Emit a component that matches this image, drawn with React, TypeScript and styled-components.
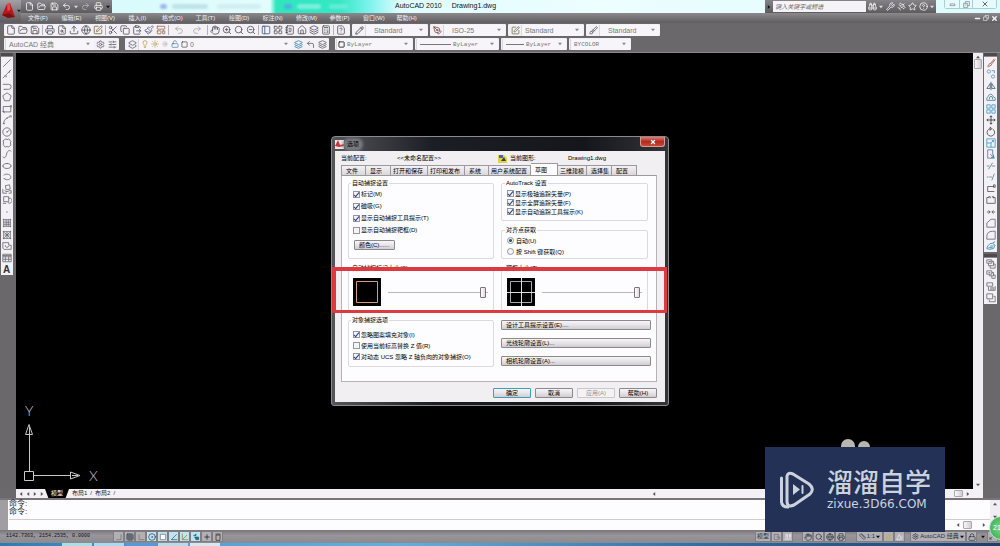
import React from "react";
import styled, { createGlobalStyle, css } from "styled-components";
import {
  File, FolderOpen, Save, Printer, FileSearch, Upload, Globe, SquarePen, Scissors, Copy, ClipboardPaste,
  Paintbrush, LayoutTemplate, Undo2, Redo2, Hand, ZoomIn, Search, ZoomOut, PanelLeft, LayoutGrid, NotebookText,
  House, Layers, Calculator, FileQuestion, Settings, SlidersHorizontal, Lightbulb, Sun, SunDim, LockOpen,
  Square, Layers2, Layers3, CornerUpLeft, Binoculars, Wrench, Satellite, Star, CircleHelp, Pencil,
  PenTool, Brush, Minus, X, Ruler, CircleDot, Printer as PlotIcon, Lock, Grid3x3, Maximize2,
} from "lucide-react";

const Global = createGlobalStyle`
  * { box-sizing: border-box; }
  body { margin: 0; background: #6b696b; font-family: "Liberation Sans", "Noto Sans CJK SC", sans-serif; }
  button, input, select, textarea { font: inherit; color: inherit; margin: 0; padding: 0; border: 0; }
  svg { display: block; flex: none; }
`;

const Page = styled.div`
  position: relative;
  display: flex;
  flex-direction: column;
  min-height: 100vh;
  overflow: hidden;
  font-size: 7px;
  line-height: 9px;
  color: #333;
`;

/* ---------- title bar ---------- */
const TitleBar = styled.header`
  position: relative;
  display: flex;
  height: 13px;
  background: linear-gradient(90deg, #d9fbfb 0 12%, #e2fdfc 27%, #2fe6bd 27.6%, #35e8c4 34%, #7ff3ee 37%, #dffcff 40%, #edfeff 60%, #ddfbfc 100%);
`;
const QuickBar = styled.div`
  display: flex;
  align-items: center;
  justify-content: space-between;
  width: 112px;
  padding: 0 2px 0 25px;
  color: #fff;
  background: linear-gradient(#858387, #5d5b5f);
`;
const Title = styled.h1`
  position: absolute;
  top: 1px;
  left: 395px;
  margin: 0;
  display: flex;
  gap: 10px;
  font-size: 7px;
  line-height: 10px;
  font-weight: 400;
  color: #111;
`;
const GlassBlur = styled.div`
  display: flex;
  align-items: center;
  gap: 5px;
  padding-left: 48px;
  filter: blur(1px);
`;
const Smudge = styled.i<{ $w: number; $c: string; $gap?: number }>`
  width: ${(p) => p.$w}px;
  height: 5px;
  border-radius: 3px;
  margin-left: ${(p) => p.$gap || 0}px;
  background: ${(p) => p.$c};
`;
const InfoCenter = styled.div`
  display: flex;
  align-items: center;
  justify-content: space-between;
  width: 171px;
  margin-left: auto;
  padding: 0 2px;
  color: #fff;
  background: linear-gradient(#858387, #5d5b5f);
`;
const SearchBox = styled.input`
  width: 93px;
  height: 11px;
  padding-left: 2px;
  background: #f5f3f7;
  font-size: 6px;
  font-style: italic;
  &::placeholder { color: #666; opacity: 1; }
`;
const WindowButtons = styled.div`
  display: flex;
  height: 9px;
  margin: 0 3px 0 8px;
  border: 1px solid #a9cdd4;
  border-top: 0;
  border-radius: 0 0 3px 3px;
`;
const WinButton = styled.button<{ $w: number }>`
  display: grid;
  place-items: center;
  width: ${(p) => p.$w}px;
  background: #e6fafb;
  color: #667;
  & + & { border-left: 1px solid #a9cdd4; }
`;
const LogoButton = styled.button`
  position: absolute;
  top: 0;
  left: 0;
  display: flex;
  align-items: center;
  width: 21px;
  height: 22px;
  background: linear-gradient(#a3a1a5, #5e5c60);
  color: #222;
`;
const Plain = styled.button`
  display: grid;
  place-items: center;
  background: none;
`;

/* ---------- menu bar ---------- */
const MenuBar = styled.nav`
  display: flex;
  align-items: center;
  justify-content: space-between;
  height: 10px;
  padding: 0 2px 0 28px;
  background: linear-gradient(#8b898c, #5f5d60);
  color: #f2f2f2;
`;
const Menus = styled.div`
  display: grid;
  grid-template-columns: repeat(12, 1fr);
  width: 402px;
`;
const MenuItem = styled.button`
  background: none;
  text-align: left;
  font-size: 6px;
  line-height: 9px;
  white-space: nowrap;
`;
const DocButtons = styled.div`
  display: flex;
  gap: 2px;
`;

/* ---------- toolbars ---------- */
const Toolbars = styled.div`
  display: flex;
  flex-direction: column;
  gap: 2px;
  padding: 1px 4px 2px;
  background: #6a686b;
  border-bottom: 1px solid #8a888b;
`;
const ToolRow = styled.div<{ $gap: number }>`
  display: flex;
  gap: ${(p) => p.$gap}px;
`;
const Strip = styled.div<{ $w?: number }>`
  display: flex;
  align-items: center;
  width: ${(p) => (p.$w ? p.$w + "px" : "auto")};
  height: 12px;
  padding: 0 1px;
  background: #f3f1f5;
  border-radius: 1px;
  color: #4a4a55;
`;
const Tool = styled.button<{ $c?: string; $w?: number }>`
  display: grid;
  place-items: center;
  width: ${(p) => p.$w || 12}px;
  height: 11px;
  background: none;
  color: ${(p) => p.$c || "#55555e"};
`;
const Sep = styled.i`
  width: 1px;
  height: 10px;
  margin: 0 1px;
  background: #b4b2b6;
`;
const Field = styled.label<{ $w: number; $pad: number }>`
  display: flex;
  align-items: center;
  gap: 2px;
  width: ${(p) => p.$w}px;
  height: 11px;
  padding: 0 4px 0 ${(p) => p.$pad}px;
  border-left: 1px solid #dad8dc;
  background: #f7f5f9;
`;
const Select = styled.select<{ $mono?: boolean }>`
  flex: 1;
  min-width: 0;
  appearance: none;
  background: none;
  color: #777;
  font-size: ${(p) => (p.$mono ? 6 : 7)}px;
  line-height: 9px;
  font-family: ${(p) => (p.$mono ? '"Liberation Mono"' : '"Liberation Sans"')}, "Noto Sans CJK SC", sans-serif;
`;

/* ---------- workspace ---------- */
const Workspace = styled.main`
  display: flex;
  flex: 1;
  min-height: 400px;
`;
const SidePalette = styled.aside<{ $w: number }>`
  display: flex;
  flex-direction: column;
  width: ${(p) => p.$w}px;
  padding: 0 3px 0 1px;
  background: #6a686b;
`;
const Grip = styled.i`
  height: 4px;
  background: #4c4a4d;
  border-bottom: 1px solid #8a888b;
`;
const ToolColumn = styled.div<{ $h: number }>`
  display: flex;
  flex-direction: column;
  justify-content: space-around;
  align-items: center;
  height: ${(p) => p.$h}px;
  margin-bottom: 2px;
  background: #f3f1f5;
`;
const Canvas = styled.section`
  display: flex;
  align-items: flex-end;
  flex: 1;
  background: #000;
`;
const VScroll = styled.div`
  display: flex;
  flex-direction: column;
  align-items: center;
  width: 10px;
  padding: 2px 0;
  background: #f0eef2;
`;
const Thumb = styled.i<{ $w: number; $h: number }>`
  width: ${(p) => p.$w}px;
  height: ${(p) => p.$h}px;
  border: 1px solid #a9a7ab;
  border-radius: 1px;
  background: linear-gradient(90deg, #f8f8f8, #cfcdd1);
`;
const Push = styled.i`
  flex: 1;
`;
const LayoutRow = styled.div`
  display: flex;
  align-items: center;
  height: 9px;
  margin: 0 17px 0 16px;
  padding: 0 3px 0 1px;
  background: #f3f1f5;
  font-size: 6px;
`;
const SheetTab = styled.button<{ $on?: boolean }>`
  height: 9px;
  padding: 0 3px;
  background: ${(p) => (p.$on ? "#000" : "none")};
  color: ${(p) => (p.$on ? "#fff" : "#222")};
  line-height: 9px;
  ${(p) => p.$on && css`clip-path: polygon(0 0, 100% 0, 86% 100%, 14% 100%); padding: 0 6px;`}
`;

/* ---------- command line ---------- */
const CommandArea = styled.section`
  display: flex;
  height: 32px;
  border-top: 2px solid #777579;
  background: #fdfcfe;
`;
const CommandGrip = styled.div`
  width: 8px;
  background: #a09ea2;
`;
const CommandBody = styled.div`
  display: flex;
  flex-direction: column;
  flex: 1;
  padding-left: 1px;
`;
const History = styled.output`
  height: 20px;
  border-bottom: 1px solid #cfcdd1;
  color: #222;
  font-size: 8px;
  line-height: 8px;
  white-space: pre-line;
`;
const CommandRow = styled.div`
  display: flex;
  align-items: center;
  gap: 3px;
  height: 10px;
  padding-right: 4px;
`;
const CommandInput = styled.input`
  flex: 1;
  height: 9px;
  background: none;
`;

/* ---------- status bar and task bar ---------- */
const StatusBar = styled.footer`
  display: flex;
  align-items: center;
  height: 13px;
  padding: 0 2px 0 6px;
  background: linear-gradient(#77757a, #98969a 40%, #8c8a8e);
  font-size: 6px;
  color: #111;
`;
const Coords = styled.span`
  width: 107px;
  font-family: "Liberation Mono", monospace;
  font-size: 5px;
`;
const StatusButton = styled.button<{ $on?: boolean; $w?: number }>`
  display: flex;
  align-items: center;
  justify-content: center;
  gap: 1px;
  height: 11px;
  width: ${(p) => p.$w || 11}px;
  border: 1px solid #807e82;
  background: ${(p) => (p.$on ? "#bfe3ef" : "#b2b0b4")};
  color: #26343c;
  white-space: nowrap;
`;
const Gap = styled.i<{ $w: number }>`
  width: ${(p) => p.$w}px;
`;
const TaskBar = styled.div`
  display: flex;
  gap: 2px;
  height: 3px;
  padding-left: 62px;
  background: linear-gradient(90deg, #2c7cb4, #4fa4d8 20%, #5fb0e0 40%, #2f6fa8 70%, #1c3f6c);
`;
const Task = styled.i<{ $c: string }>`
  width: 30px;
  background: ${(p) => p.$c};
`;

/* ---------- options dialog ---------- */
const Dialog = styled.section`
  position: absolute;
  top: 136px;
  left: 50%;
  width: 338px;
  transform: translateX(-50%);
  display: flex;
  flex-direction: column;
  padding: 0 3px 3px;
  border: 1px solid #8b8b8e;
  border-radius: 4px 4px 3px 3px;
  background: linear-gradient(90deg, #55565a, #1b1e24 30%, #14161b 75%, #33343a);
  color: #000;
  font-size: 6px;
  line-height: 8px;
  white-space: nowrap;
`;
const DialogTitle = styled.header`
  display: flex;
  align-items: center;
  gap: 1px;
  height: 14px;
  color: #000;
`;
const TitleGlow = styled.h2`
  margin: 0;
  padding: 0 2px;
  font-size: 6px;
  line-height: 9px;
  font-weight: 400;
  background: #77797e;
  border-radius: 4px;
  box-shadow: 0 0 3px 2px #77797e;
`;
const CloseButton = styled.button`
  display: grid;
  place-items: center;
  align-self: flex-start;
  width: 25px;
  height: 10px;
  margin-left: auto;
  border: 1px solid #d99a92;
  border-top: 0;
  border-radius: 0 0 3px 3px;
  background: linear-gradient(#d98078, #b52a1e 50%, #c6483a);
  color: #fff;
`;
const DialogBody = styled.div`
  padding: 2px 8px 4px 6px;
  background: #f1eff2;
`;
const ProfileRow = styled.div`
  display: grid;
  grid-template-columns: 56px 101px 12px 58px 1fr;
  align-items: center;
  height: 10px;
`;
const TabList = styled.div`
  display: flex;
  align-items: flex-end;
  height: 12px;
`;
const Tab = styled.button<{ $w: number; $on?: boolean }>`
  width: ${(p) => p.$w}px;
  height: ${(p) => (p.$on ? 12 : 10)}px;
  padding-left: ${(p) => (p.$w > 28 ? 2 : 4)}px;
  text-align: left;
  border: 1px solid #9b999d;
  border-left-width: 0;
  border-bottom: 0;
  background: ${(p) => (p.$on ? "#fff" : "linear-gradient(#f4f2f5, #d9d7da)")};
  &:first-child { border-left-width: 1px; }
`;
const TabPanel = styled.div`
  display: grid;
  grid-template-columns: 146px 150px;
  column-gap: 7px;
  height: 207px;
  padding: 3px 6px 0;
  border: 1px solid #b5b3b7;
  border-top-color: #9b999d;
  background: #fdfcfe;
`;
const Column = styled.div`
  display: flex;
  flex-direction: column;
  gap: 5px;
`;
const Group = styled.fieldset<{ $h: number; $pad: number; $right?: boolean }>`
  min-width: 0;
  height: ${(p) => p.$h}px;
  width: ${(p) => (p.$right ? "147px" : "auto")};
  margin: 0;
  padding: ${(p) => p.$pad}px 0 0 ${(p) => (p.$right ? 5 : 4)}px;
  border: 1px solid #dcdadf;
  border-radius: 2px;
`;
const Legend = styled.legend`
  padding: 0 1px;
  margin-left: -2px;
  line-height: 8px;
`;
const Option = styled.label<{ $h: number }>`
  display: flex;
  align-items: center;
  gap: 1px;
  height: ${(p) => p.$h}px;
`;
const Check = styled.input`
  appearance: none;
  display: grid;
  place-items: center;
  width: 7px;
  height: 7px;
  border: 1px solid #9694a0;
  background: #f4f4f8;
  &:checked::after {
    content: "";
    width: 2px;
    height: 5px;
    margin-top: -1px;
    border: solid #2b3f86;
    border-width: 0 1px 1px 0;
    transform: rotate(40deg);
  }
`;
const Radio = styled(Check)`
  border-radius: 50%;
  margin-right: 1px;
  &:checked::after {
    width: 3px;
    height: 3px;
    margin: 0;
    border: 0;
    border-radius: 50%;
    background: #17526f;
  }
`;
const PushButton = styled.button<{ $w?: number; $kind?: "default" | "off"; $left?: boolean }>`
  width: ${(p) => (p.$w ? p.$w + "px" : "100%")};
  height: 10px;
  padding: 0 4px;
  text-align: ${(p) => (p.$left ? "left" : "center")};
  line-height: 8px;
  border: 1px solid ${(p) => (p.$kind === "default" ? "#3f9db5" : p.$kind === "off" ? "#c9c7cb" : "#8b898d")};
  border-radius: 1px;
  color: ${(p) => (p.$kind === "off" ? "#929094" : "#000")};
  background: ${(p) => (p.$kind === "off" ? "#f4f2f5" : "linear-gradient(#f6f5f7, #e6e4e8 50%, #cfcdd1)")};
`;
const ColorButtonRow = styled.div`
  padding: 4px 0 0 1px;
`;
const SizeRow = styled.div`
  display: flex;
  align-items: center;
  gap: 7px;
`;
const Range = styled.input`
  appearance: none;
  width: 100px;
  height: 12px;
  background: none;
  &::-webkit-slider-runnable-track { height: 1px; background: #b9b7bb; }
  &::-webkit-slider-thumb {
    appearance: none;
    width: 6px;
    height: 11px;
    margin-top: -5px;
    border: 1px solid #77757a;
    border-radius: 1px;
    background: linear-gradient(90deg, #fff, #dcdade);
  }
`;
const ButtonStack = styled.div`
  display: flex;
  flex-direction: column;
  gap: 8px;
  padding-top: 4px;
`;
const DialogButtons = styled.div`
  display: flex;
  justify-content: flex-end;
  gap: 4px;
  padding-top: 6px;
`;
const Highlight = styled.div`
  position: absolute;
  top: 130px;
  left: 0;
  right: 1px;
  height: 46px;
  border: 4px solid #dc3a40;
  border-bottom-width: 3px;
  border-right-width: 3px;
`;

/* ---------- overlays ---------- */
const Watermark = styled.div`
  position: absolute;
  right: 55px;
  bottom: 14px;
  display: flex;
  align-items: center;
  gap: 13px;
  width: 180px;
  height: 85px;
  padding-left: 14px;
  background: #233157;
  color: #ccd2dc;
`;
const Brand = styled.div`
  font-size: 26px;
  line-height: 28px;
  font-weight: 500;
  font-family: "Liberation Sans", "Noto Sans CJK SC", sans-serif;
`;
const BrandUrl = styled.div`
  font-family: "DejaVu Sans", sans-serif;
  font-size: 12px;
  line-height: 14px;
`;
const Ears = styled.svg`
  position: absolute;
  right: 129px;
  bottom: 99px;
`;
const Ball = styled.div`
  position: absolute;
  right: -13px;
  bottom: 6px;
  width: 24px;
  height: 24px;
  padding-left: 3px;
  border-radius: 50%;
  border: 1px solid #bfe8c6;
  background: radial-gradient(#7fd98c, #2ea64c);
  color: #fff;
  font-size: 7px;
  line-height: 22px;
`;

const Arrow = ({ d = "down", c = "#555" }: { d?: "up" | "down" | "left" | "right"; c?: string }) => {
  const p = { up: "M0 4L2.5 1L5 4Z", down: "M0 1L2.5 4L5 1Z", left: "M4 0L1 2.5L4 5Z", right: "M1 0L4 2.5L1 5Z" }[d];
  return <svg width="4" height="4" viewBox="0 0 5 5"><path d={p} fill={c} /></svg>;
};

const Draw = ({ d, c = "#6a6a74", fill = "none", s = 10 }: { d: string; c?: string; fill?: string; s?: number }) => (
  <svg width={s} height={s} viewBox="0 0 12 12" fill={fill} stroke={c} strokeWidth="1"><path d={d} /></svg>
);

const drawTools: [string, string][] = [
  ["直线", "M1.500 10.500L10.500 1.500"],
  ["构造线", "M1 11L4 8M5 7L7 5M8 4L11 1M3 8h2v2M7 4h2v-2"],
  ["多段线", "M1 4H8A2.500 2.500 0 0 1 8 10H3M2 10H4"],
  ["正多边形", "M6 1L11 4.500L9 10.500H3L1 4.500Z"],
  ["矩形", "M1.500 3H10.500V9.500H1.500ZM0.500 9h2v2M9.500 2h2v2"],
  ["圆弧", "M2 11C2 6 5 3 10 2M1 10h2v1M5 4h2M9 1h2v2"],
  ["圆", "M6 1A5 5 0 1 1 5.900 1ZM6 6L9 3.500M5 6h2"],
  ["修订云线", "M3 2Q5 0 6 2Q9 0 9.500 3Q12 4 10 6Q12 9 9 10Q7 12 6 10Q3 12 2.500 9Q0 8 2 6Q0 3 3 2Z"],
  ["样条曲线", "M1 9C3 13 5 9 5.500 6S9 0 11 3"],
  ["椭圆", "M6 3A5 3 0 1 1 5.900 3ZM5 3h2M1 6h1M10 6h1"],
  ["椭圆弧", "M2 4C5 1 11 3 10.500 6.500S4 10 3 8M2 8h2"],
  ["插入块", "M1 6V11H6M4 2L9 1L10 6L5 7ZM3 8A4 3 0 0 0 9 8M9 8h2v3h-3"],
  ["创建块", "M2 2H8V8H2ZM8 4A3 3 0 1 1 7 9M1 10H5"],
  ["点", "M5.500 6H6.500M6 5.500V6.500"],
  ["图案填充", "M2 1V11M10 1V11M1 2H11M1 10H11M2 5H10M2 7.500H10M5 2V10M7.500 2V10"],
  ["渐变色", "M2 1V11M10 1V11M1 2H11M1 10H11M3 3L9 9M9 3L3 9M6 2V10M3 6H9"],
  ["面域", "M1 2H8V5H11V10H5Q1 11 1 7ZM4 5A2 2 0 1 0 8 6"],
  ["表格", "M1 1.500H11V10.500H1ZM1 3H11M1 4.500H11M1 7.500H11M4 4V10M8 4V10"],
];
const modifyTools: [string, string, string][] = [
  ["删除", "M2 10L5 6L7 8L3 10.500ZM6 6L10 1M7 7L11 2", "#9a5a3c"],
  ["复制", "M3.500 1A2 2 0 1 1 3.400 1ZM8.500 7A2 2 0 1 1 8.400 7ZM7 2H10V5", "#5a8fae"],
  ["镜像", "M6 1V11M5 3V9H1ZM7 3V9H11Z", "#4b6a82"],
  ["偏移", "M1 10V7Q3 6 3 4Q6 1 8 4Q8 6 11 7V10ZM4 9Q4 5 6 5T8 9", "#4a7f9c"],
  ["阵列", "M1 1H5V5H1ZM7 1H11V5H7ZM1 7H5V11H1ZM7 7H11V11H7Z", "#3f9ac4"],
  ["移动", "M6 1V11M1 6H11M4.500 2.500L6 1L7.500 2.500M4.500 9.500L6 11L7.500 9.500M2.500 4.500L1 6L2.500 7.500M9.500 4.500L11 6L9.500 7.500", "#333"],
  ["旋转", "M5 2A4.500 4.500 0 1 0 8 2.500M5 0V4L7 2Z", "#444"],
  ["缩放", "M1 1H11V11H1ZM1 6H6V11M6 6L9 3M7 3H9V5", "#3f9ac4"],
  ["拉伸", "M2 1H8V6L10 11H2ZM5 6L9 10M9 7V10H6", "#4a7f9c"],
  ["修剪", "M1 6H4M7 6H11M3 10L8 2", "#5a7f94"],
  ["延伸", "M1 6H3M4 6H7M7 10L10 2", "#5a7f94"],
  ["打断于点", "M10 3H2V9H10M9 1H11V4H9Z", "#555"],
  ["打断", "M4 3H1V10H11V3H8M3 2H5V4M7 2H9V4", "#555"],
  ["合并", "M1 6H5M7 6H11M3 4L5 6L3 8M9 4L7 6L9 8", "#555"],
  ["倒角", "M1 11V6L6 1.500H11V11Z", "#667"],
  ["圆角", "M1 11V8Q1 1.500 8 1.500H11V11Z", "#667"],
  ["分解", "M2 6L5 3L8 3L11 5L9 9L4 10L1 9ZM5 6H9M8 2L11 1M3 8H8", "#2c8ab5"],
];
const orderTools: [string, string][] = [
  ["前置", "M1 1H7V5H1ZM3 5V8H9V3H7M5 8V11H11V6H9M3 3H6"],
  ["后置", "M1 1H7V5H1ZM7 3H9V7H4V5M7 7V10H11V6H9M3 3H5"],
  ["置于对象之上", "M1 1H8V5H1ZM3 6V10H11V5M5 7H10M5 8.500H10"],
  ["置于对象之下", "M1 1H8V7H1ZM4 8V10.500H11V4H9"],
];
const standardTools: ([string, any, string?] | null)[] = [
  ["新建", File], ["打开", FolderOpen], ["保存", Save], null,
  ["打印", Printer], ["打印预览", FileSearch], ["发布", Upload], ["三维DWF", Globe], ["标记", SquarePen, "#7a6a3c"], null,
  ["剪切", Scissors], ["复制", Copy], ["粘贴", ClipboardPaste], ["特性匹配", Paintbrush, "#6a6a8c"], ["块编辑器", LayoutTemplate, "#9a6a4c"], null,
  ["放弃", Undo2, "#aaa"], ["重做", Redo2, "#aaa"], null,
  ["平移", Hand], ["实时缩放", ZoomIn], ["窗口缩放", Search], ["上一个", ZoomOut], null,
  ["特性", PanelLeft, "#3c5a8c"], ["设计中心", LayoutGrid], ["工具选项板", NotebookText], ["图纸集", House], ["标记集", Layers], ["计算器", Calculator], null,
  ["帮助", FileQuestion],
];
const menus = ["文件(F)", "编辑(E)", "视图(V)", "插入(I)", "格式(O)", "工具(T)", "绘图(D)", "标注(N)", "修改(M)", "参数(P)", "窗口(W)", "帮助(H)"];
const tabs: [string, number][] = [
  ["文件", 25], ["显示", 25], ["打开和保存", 37], ["打印和发布", 37], ["系统", 24], ["用户系统配置", 42],
  ["草图", 27], ["三维建模", 29], ["选择集", 25], ["配置", 25],
];

const Combo = ({ label, value, w, pad = 3, mono, children }: { label: string; value: string; w: number; pad?: number; mono?: boolean; children?: React.ReactNode }) => (
  <Field $w={w} $pad={pad}>
    {children}
    <Select aria-label={label} $mono={mono}><option>{value}</option></Select>
    <Arrow c="#888" />
  </Field>
);

const CheckRow = ({ label, on, h }: { label: string; on?: boolean; h: number }) => (
  <Option $h={h}><Check type="checkbox" defaultChecked={on} />{label}</Option>
);

const OptionsDialog = () => (
  <Dialog role="dialog" aria-label="选项">
    <DialogTitle>
      <svg width="9" height="9" viewBox="0 0 9 9"><path d="M0 0H9V9H0Z" fill="#f1e4e4" /><path d="M0 6L3 0L5 5L9 4V6L4 7Z" fill="#c7343a" /></svg>
      <TitleGlow>选项</TitleGlow>
      <CloseButton aria-label="关闭"><X size={6} strokeWidth={5} /></CloseButton>
    </DialogTitle>
    <DialogBody>
      <ProfileRow>
        <span>当前配置:</span>
        <span>&lt;&lt;未命名配置&gt;&gt;</span>
        <svg width="9" height="9" viewBox="0 0 9 9"><path d="M0 1H6L9 4V9H0Z" fill="#e8cf4a" /><path d="M1 1H5V4H1Z" fill="#4668a0" /><path d="M3 7L6 3L8 7Z" fill="#39424e" /></svg>
        <span>当前图形:</span>
        <span>Drawing1.dwg</span>
      </ProfileRow>
      <TabList role="tablist">
        {tabs.map(([t, w]) => <Tab key={t} role="tab" $w={w} $on={t === "草图"}>{t}</Tab>)}
      </TabList>
      <TabPanel role="tabpanel">
        <Column>
          <Group $h={80} $pad={1}>
            <Legend>自动捕捉设置</Legend>
            <CheckRow label="标记(M)" on h={12} />
            <CheckRow label="磁吸(G)" on h={12} />
            <CheckRow label="显示自动捕捉工具提示(T)" on h={12} />
            <CheckRow label="显示自动捕捉靶框(D)" h={12} />
            <ColorButtonRow><PushButton $w={41} $left>颜色(C)......</PushButton></ColorButtonRow>
          </Group>
          <Group $h={47} $pad={6}>
            <Legend>自动捕捉标记大小(S)</Legend>
            <SizeRow>
              <svg width="28" height="28"><path d="M0 0H28V28H0Z" /><path d="M3.500 3.500H24.500V24.500H3.500Z" fill="none" stroke="#d99a78" /></svg>
              <Range type="range" aria-label="自动捕捉标记大小" defaultValue={98} />
            </SizeRow>
          </Group>
          <Group $h={51} $pad={5}>
            <Legend>对象捕捉选项</Legend>
            <CheckRow label="忽略图案填充对象(I)" on h={11} />
            <CheckRow label="使用当前标高替换 Z 值(R)" h={11} />
            <CheckRow label="对动态 UCS 忽略 Z 轴负向的对象捕捉(O)" on h={11} />
          </Group>
        </Column>
        <Column>
          <Group $h={42} $pad={2} $right>
            <Legend>AutoTrack 设置</Legend>
            <CheckRow label="显示极轴追踪矢量(P)" on h={9} />
            <CheckRow label="显示全屏追踪矢量(F)" on h={9} />
            <CheckRow label="显示自动追踪工具提示(K)" on h={9} />
          </Group>
          <Group $h={33} $pad={1} $right>
            <Legend>对齐点获取</Legend>
            <Option $h={11}><Radio type="radio" name="align" defaultChecked />自动(U)</Option>
            <Option $h={11}><Radio type="radio" name="align" />按 Shift 键获取(Q)</Option>
          </Group>
          <Group $h={47} $pad={6} $right>
            <Legend>靶框大小(Z)</Legend>
            <SizeRow>
              <svg width="28" height="28"><path d="M0 0H28V28H0Z" /><path d="M3.500 3.500H24.500V24.500H3.500Z" fill="none" stroke="#aaa" /><path d="M0 14.500H28M14.500 0V28" stroke="#ddd" /></svg>
              <Range type="range" aria-label="靶框大小" defaultValue={98} />
            </SizeRow>
          </Group>
          <ButtonStack>
            <PushButton $left>设计工具提示设置(E)....</PushButton>
            <PushButton $left>光线轮廓设置(L)...</PushButton>
            <PushButton $left>相机轮廓设置(A)...</PushButton>
          </ButtonStack>
        </Column>
      </TabPanel>
      <DialogButtons>
        <PushButton $w={38} $kind="default">确定</PushButton>
        <PushButton $w={38}>取消</PushButton>
        <PushButton $w={38} $kind="off" disabled>应用(A)</PushButton>
        <PushButton $w={38}>帮助(H)</PushButton>
      </DialogButtons>
    </DialogBody>
    <Highlight />
  </Dialog>
);

export default function App() {
  return (
    <Page>
      <Global />
      <TitleBar>
        <QuickBar>
          {[File, FolderOpen, Save, Undo2].map((I, i) => <Plain key={i} aria-label={["新建", "打开", "保存", "放弃"][i]}><I size={9} /></Plain>)}
          <Arrow c="#ddd" />
          <Plain aria-label="重做"><Redo2 size={9} color="#bbb" /></Plain>
          <Plain aria-label="打印"><Printer size={9} /></Plain>
          <Arrow c="#111" />
        </QuickBar>
        <GlassBlur aria-hidden>
          <Smudge $w={7} $c="#9db4ef" /><Smudge $w={36} $c="#bfe3e9" /><Smudge $w={44} $c="#d2eef1" $gap={4} />
          <Smudge $w={8} $c="#4fb0e0" $gap={18} /><Smudge $w={24} $c="#7af0dc" /><Smudge $w={20} $c="#63ecd6" $gap={3} />
        </GlassBlur>
        <Title><span>AutoCAD 2010</span><span>Drawing1.dwg</span></Title>
        <InfoCenter>
          <Arrow d="right" c="#111" />
          <SearchBox aria-label="搜索" placeholder="键入关键字或短语" />
          <Plain aria-label="搜索"><Binoculars size={9} /></Plain><Arrow c="#ddd" />
          <Plain aria-label="速博"><Wrench size={9} /></Plain>
          <Plain aria-label="通讯中心"><Satellite size={9} /></Plain>
          <Plain aria-label="收藏夹"><Star size={9} /></Plain>
          <Plain aria-label="帮助"><CircleHelp size={9} /></Plain>
          <Arrow c="#ddd" />
        </InfoCenter>
        <WindowButtons>
          <WinButton $w={14} aria-label="最小化"><Draw d="M2 5H10V8H2Z" s={7} /></WinButton>
          <WinButton $w={13} aria-label="还原"><Draw d="M4 4V1H11V8H8M1 4H8V11H1ZM3 7H6" s={7} /></WinButton>
          <WinButton $w={24} aria-label="关闭"><X size={8} strokeWidth={3} /></WinButton>
        </WindowButtons>
        <LogoButton aria-label="应用程序菜单">
          <svg width="17" height="20" viewBox="0 0 17 20">
            <path d="M2 14L7 3L10 2L15 16L11 15L9 12L5 15Z" fill="#b5171e" />
            <path d="M7 3L10 2L10.500 9L7.500 10Z" fill="#e8474a" />
            <path d="M2 14L9 12L15 16L8 17Z" fill="#7c0d12" />
          </svg>
          <Arrow c="#222" />
        </LogoButton>
      </TitleBar>
      <MenuBar>
        <Menus>{menus.map((m) => <MenuItem key={m}>{m}</MenuItem>)}</Menus>
        <DocButtons>
          <Plain aria-label="最小化图形"><Minus size={7} strokeWidth={5} /></Plain>
          <Plain aria-label="还原图形"><Draw d="M4 4V1H11V8H8M1 4H8V11H1Z" c="#fff" s={6} /></Plain>
          <Plain aria-label="关闭图形"><X size={7} strokeWidth={5} /></Plain>
        </DocButtons>
      </MenuBar>
      <Toolbars>
        <ToolRow $gap={2}>
          <Strip $w={346}>
            {standardTools.map((t, i) => {
              if (!t) return <Sep key={i} />;
              const I = t[1];
              const history = t[0] === "放弃" || t[0] === "重做";
              return (
                <Tool key={i} aria-label={t[0]} $c={t[2]} $w={history ? 18 : 12}>
                  <I size={10} />
                </Tool>
              );
            })}
          </Strip>
          <Strip>
            <Tool aria-label="文字样式" $c="#333"><Pencil size={9} /></Tool>
            <Combo label="文字样式" value="Standard" w={62} pad={8} />
          </Strip>
          <Strip>
            <Tool aria-label="标注样式" $c="#7a3c3c"><PenTool size={9} /></Tool>
            <Combo label="标注样式" value="ISO-25" w={62} pad={8} />
          </Strip>
          <Strip>
            <Tool aria-label="表格样式" $c="#6a6a3c"><SquarePen size={9} /></Tool>
            <Combo label="表格样式" value="Standard" w={62} />
          </Strip>
          <Strip>
            <Tool aria-label="多重引线样式"><Brush size={9} /></Tool>
            <Combo label="多重引线样式" value="Standard" w={60} pad={8} />
          </Strip>
        </ToolRow>
        <ToolRow $gap={6}>
          <Strip $w={115}>
            <Combo label="工作空间" value="AutoCAD 经典" w={90} />
            <Tool aria-label="工作空间设置"><Settings size={9} /></Tool>
            <Tool aria-label="我的工作空间"><SlidersHorizontal size={9} /></Tool>
          </Strip>
          <Strip $w={204}>
            <Tool aria-label="图层特性"><Layers2 size={9} /></Tool>
            <Combo label="图层" value="0" w={154} pad={2}>
              <Lightbulb size={8} color="#a89022" /><Sun size={8} color="#b0923a" /><SunDim size={8} color="#aaa" /><LockOpen size={8} color="#3f7ca0" /><Square size={7} color="#222" />
            </Combo>
            <Tool aria-label="置为当前" $c="#2c7ba5"><Layers3 size={9} /></Tool>
            <Tool aria-label="上一个图层"><CornerUpLeft size={9} /></Tool>
            <Tool aria-label="图层状态"><Layers size={9} /></Tool>
          </Strip>
          <ToolRow $gap={2}>
            <Strip><Combo label="颜色" value="ByLayer" w={76} pad={1} mono><Square size={7} color="#222" strokeWidth={3} /></Combo></Strip>
            <Strip><Combo label="线型" value="ByLayer" w={82} mono><svg width="31" height="1"><path d="M0 0H31V1H0Z" fill="#777" /></svg></Combo></Strip>
            <Strip><Combo label="线宽" value="ByLayer" w={64} mono><svg width="18" height="1"><path d="M0 0H18V1H0Z" fill="#777" /></svg></Combo></Strip>
            <Strip><Combo label="打印样式" value="BYCOLOR" w={60} mono /></Strip>
          </ToolRow>
        </ToolRow>
      </Toolbars>
      <Workspace>
        <SidePalette $w={16}>
          <Grip />
          <ToolColumn $h={218}>
            {drawTools.map(([n, d]) => <Plain key={n} aria-label={n}><Draw d={d} /></Plain>)}
            <Plain aria-label="多行文字">
              <svg width="10" height="10"><text x="1" y="9" fontSize="10" fontWeight="700" fill="#333">A</text></svg>
            </Plain>
          </ToolColumn>
        </SidePalette>
        <Canvas aria-label="绘图区">
          <svg width="100" height="90" fill="none" stroke="#c8c8c8">
            <path d="M8.500 72.500H17.500V81.500H8.500ZM13.500 72V35M9.500 35.500L13 25.500L16.500 35.500ZM13.500 28V35M18 76.500H54M54.500 73L64 76.500L54.500 80ZM56 76.500H62" />
            <g fill="#c8c8c8" stroke="none" fontFamily="Lato" fontWeight="300" fontSize="14"><text x="9" y="17">Y</text><text x="73" y="82">X</text></g>
          </svg>
        </Canvas>
        <VScroll><Arrow d="up" /><Gap $w={1} /><Thumb $w={8} $h={10} /><Push /><Arrow /></VScroll>
        <SidePalette $w={17}>
          <Grip />
          <ToolColumn $h={195}>
            {modifyTools.map(([n, d, c]) => <Plain key={n} aria-label={n}><Draw d={d} c={c} /></Plain>)}
          </ToolColumn>
          <Grip />
          <ToolColumn $h={46}>
            {orderTools.map(([n, d]) => <Plain key={n} aria-label={n}><Draw d={d} /></Plain>)}
          </ToolColumn>
        </SidePalette>
      </Workspace>
      <LayoutRow>
        {(["left", "left", "right", "right"] as const).map((d, i) => (
          <Tool key={i} $w={7} aria-label={["第一个", "上一个", "下一个", "最后一个"][i]}><Arrow d={d} /></Tool>
        ))}
        <SheetTab $on>模型</SheetTab><SheetTab>布局1</SheetTab>/<SheetTab>布局2</SheetTab>/
        <Push />
        <Arrow d="left" /><Gap $w={298} />
        <Thumb $w={9} $h={7} /><Gap $w={3} /><Arrow d="right" /><Gap $w={10} />
      </LayoutRow>
      <CommandArea>
        <CommandGrip />
        <CommandBody>
          <History>{"命令:\n命令:"}</History>
          <CommandRow>
            <CommandInput aria-label="命令行" />
            <Arrow d="left" /><Thumb $w={9} $h={8} /><Gap $w={4} /><Arrow d="right" />
          </CommandRow>
        </CommandBody>
        <VScroll><Arrow d="up" /><Push /><Arrow /><Push /></VScroll>
      </CommandArea>
      <StatusBar>
        <Coords>1142.7363, 2154.2535, 0.0000</Coords>
        <StatusButton aria-label="捕捉"><Draw d="M2 10H9V2" s={8} /></StatusButton>
        <StatusButton aria-label="栅格"><Grid3x3 size={8} /></StatusButton>
        <StatusButton aria-label="正交"><Draw d="M3 2V10H11" s={8} c="#865" /></StatusButton>
        <StatusButton $on aria-label="极轴"><CircleDot size={8} /></StatusButton>
        <StatusButton $on aria-label="对象捕捉"><Draw d="M2 2H10V10H2Z" s={8} fill="#fff" /></StatusButton>
        <StatusButton $on aria-label="对象追踪"><Draw d="M10 2L2 10H11" s={8} c="#17516f" /></StatusButton>
        <StatusButton $on aria-label="动态UCS"><Draw d="M2 1V10H11M2 10L9 3" s={8} c="#8a7a22" /></StatusButton>
        <StatusButton $on aria-label="动态输入"><Draw d="M2 4H6V1M4 6H10V10H6Z" s={8} fill="#276a86" c="#276a86" /></StatusButton>
        <StatusButton aria-label="线宽"><Draw d="M6 2V10M2 6H10" s={8} c="#111" /></StatusButton>
        <StatusButton aria-label="快捷特性"><Draw d="M3 3H9V11H3ZM2 1.500H10" s={8} c="#222" /></StatusButton>
        <Push />
        <StatusButton $w={16}>模型</StatusButton>
        <StatusButton aria-label="布局"><Draw d="M2 2H8V10H2ZM5 6H10V10" s={8} /></StatusButton>
        <StatusButton aria-label="快速查看"><Draw d="M1 9H11M3 2V7M3 2H5V7M8 2V7M8 2H10V7" s={8} c="#fff" /></StatusButton>
        <Gap $w={9} />
        <StatusButton aria-label="平移"><Hand size={8} /></StatusButton>
        <StatusButton aria-label="缩放"><Search size={8} /></StatusButton>
        <StatusButton aria-label="控制盘"><Globe size={8} /></StatusButton>
        <StatusButton aria-label="运动"><PlotIcon size={8} /></StatusButton>
        <Gap $w={10} />
        <StatusButton $w={27}><Ruler size={7} />1:1<Arrow c="#111" /></StatusButton>
        <StatusButton aria-label="注释可见性"><Draw d="M1 10L5 2L8 10ZM8 4L11 1" s={8} c="#c9a93a" /></StatusButton>
        <StatusButton aria-label="自动缩放"><Draw d="M1 10L5 2L8 10ZM9 4V9" s={8} c="#eee" /></StatusButton>
        <Gap $w={5} />
        <StatusButton $w={56}><Settings size={7} />AutoCAD 经典<Arrow c="#111" /></StatusButton>
        <StatusButton aria-label="锁定"><Lock size={8} /></StatusButton>
        <Gap $w={4} /><Arrow c="#111" /><Gap $w={2} />
        <StatusButton aria-label="全屏显示"><Maximize2 size={7} /></StatusButton>
      </StatusBar>
      <TaskBar>
        {["#a6dfe6", "#a5dcf0", "#4f9be0", "#b7dce8", "#d8e8ee"].map((c) => <Task key={c} $c={c} />)}
      </TaskBar>

      <OptionsDialog />

      <Ears width="30" height="8" viewBox="0 0 30 8" fill="#b9b7b0"><ellipse cx="7" cy="7" rx="7" ry="7" /><ellipse cx="23" cy="8" rx="6" ry="6" /></Ears>
      <Watermark>
        <svg width="35" height="38" viewBox="0 0 35 38" fill="none" stroke="#ccd2dc" strokeWidth="3" strokeLinecap="round">
          <path d="M2.500 7V31Q3 36 9 36" />
          <path d="M8 5Q9 1 14 3L30 13Q36 18 31 23L15 34Q8 37 8 30Z" strokeLinejoin="round" />
          <path d="M14 13L21 18.500L14 24Z" fill="#ccd2dc" stroke="none" />
          <path d="M23.500 15V22" strokeWidth="2" />
        </svg>
        <div>
          <Brand>溜溜自学</Brand>
          <BrandUrl>zixue.3D66.COM</BrandUrl>
        </div>
      </Watermark>
      <Ball>21</Ball>
    </Page>
  );
}
